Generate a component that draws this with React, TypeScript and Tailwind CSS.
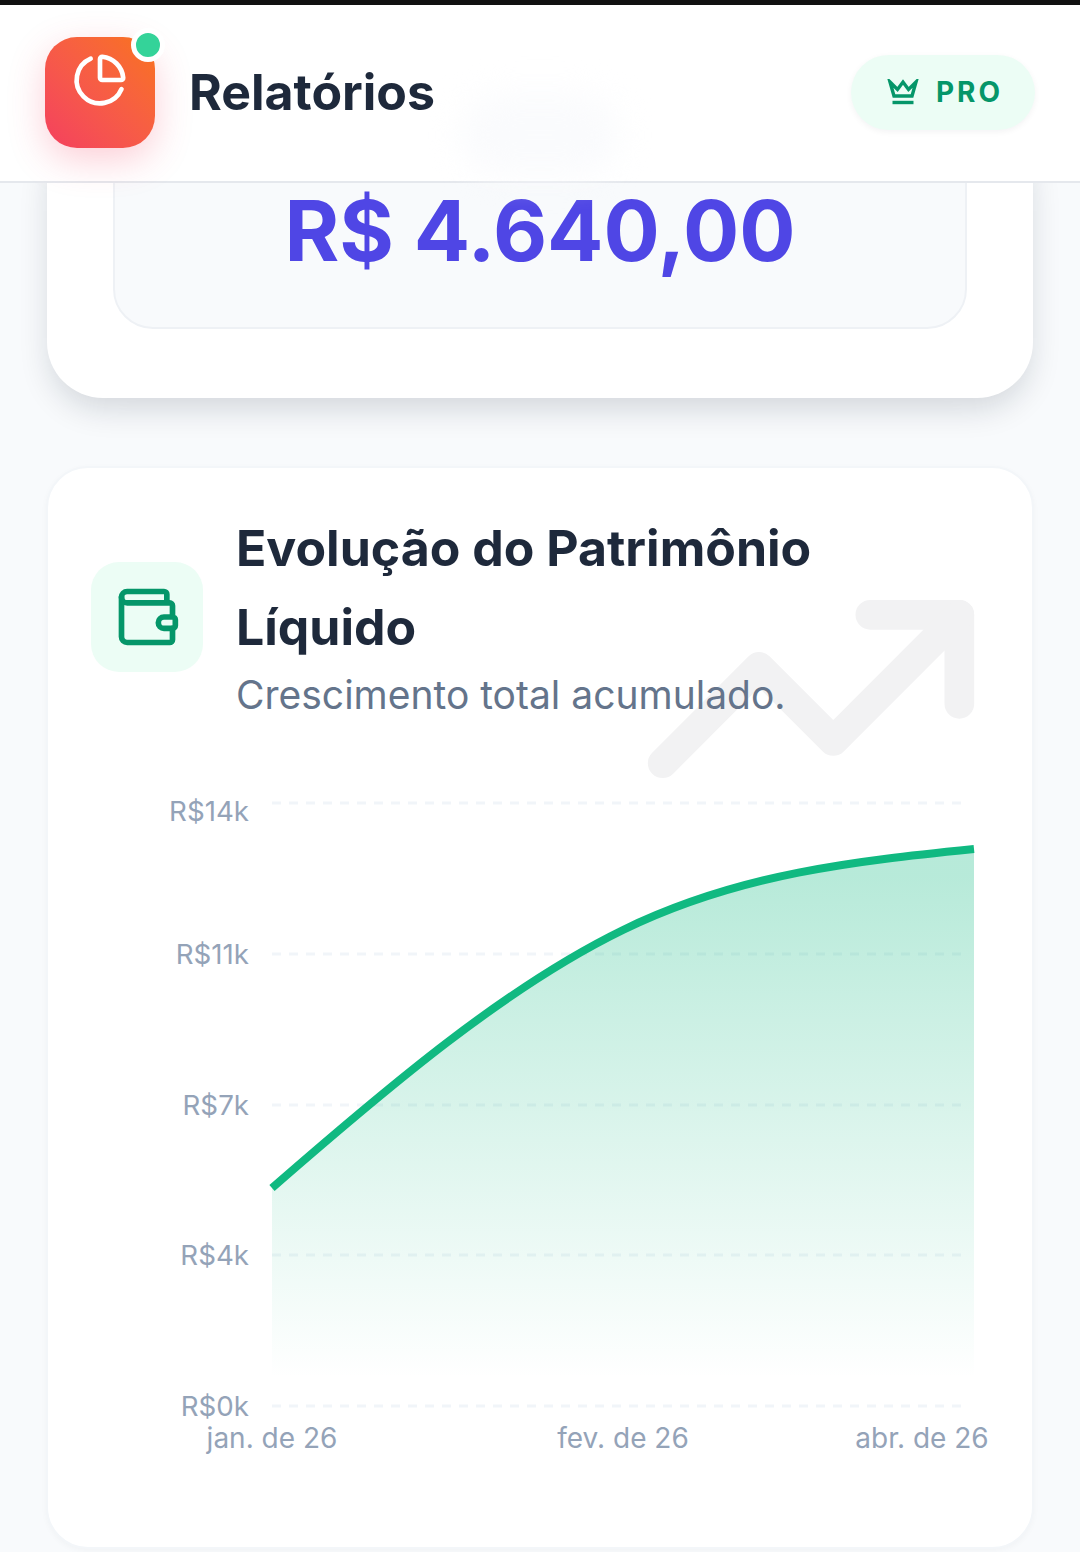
import { PieChart, TrendingUp, Wallet } from "lucide-react";

const yLabels = [
  { label: "R$14k", lineY: 23, textY: 31 },
  { label: "R$11k", lineY: 174, textY: 174 },
  { label: "R$7k", lineY: 325, textY: 325 },
  { label: "R$4k", lineY: 475, textY: 475 },
  { label: "R$0k", lineY: 626, textY: 626 },
];

const xLabels = [
  { label: "jan. de 26", x: 181 },
  { label: "fev. de 26", x: 532 },
  { label: "abr. de 26", x: 831 },
];

const linePath = "M181 408 C298 306 415 207 532 150 C649 93 766 81 883 69";

const CrownIcon = () => (
  <svg viewBox="0 0 32 26" className="h-[26px] w-[32px]" fill="none" stroke="#059669" strokeWidth="3.4">
    <path d="M3 3 L10.5 10.5 L16 3 L21.5 10.5 L29 3 L25 17 H7 Z" />
    <path d="M5.5 23.5 H26.5" />
  </svg>
);

const Chart = () => (
  <svg viewBox="0 0 898 680" className="mt-[58px] block h-[680px] w-[898px]">
    <defs>
      <linearGradient id="patrimonio" x1="0" y1="0" x2="0" y2="1">
        <stop offset="5%" stopColor="#10b981" stopOpacity={0.3} />
        <stop offset="95%" stopColor="#10b981" stopOpacity={0} />
      </linearGradient>
    </defs>
    {yLabels.map((row) => (
      <line
        key={row.label}
        x1="181"
        x2="878"
        y1={row.lineY}
        y2={row.lineY}
        stroke="#f1f5f9"
        strokeWidth="3"
        strokeDasharray="9 8"
      />
    ))}
    <path d={`${linePath} L883 626 L181 626 Z`} fill="url(#patrimonio)" />
    <path d={linePath} fill="none" stroke="#10b981" strokeWidth="8" />
    {yLabels.map((row) => (
      <text
        key={row.label}
        x="158"
        y={row.textY}
        textAnchor="end"
        dominantBaseline="central"
        fill="#94a3b8"
        fontSize="27.7"
      >
        {row.label}
      </text>
    ))}
    {xLabels.map((tick) => (
      <text
        key={tick.label}
        x={tick.x}
        y="658"
        textAnchor="middle"
        dominantBaseline="central"
        fill="#94a3b8"
        fontSize="28"
      >
        {tick.label}
      </text>
    ))}
  </svg>
);

export default function App() {
  return (
    <div className="flex h-[1552px] w-[1080px] flex-col overflow-hidden bg-[#f8fafc] font-['Inter',sans-serif]">
      <div className="h-[5px] shrink-0 bg-[#111111]" />

      {/* Header */}
      <header className="relative z-10 flex h-[178px] shrink-0 items-center justify-between border-b-2 border-[#e5e8ed] bg-white pb-[2px] pl-[45px] pr-[45px]">
        {/* faint glow behind the bar */}
        <div className="absolute left-[460px] top-[90px] h-[80px] w-[160px] rounded-full bg-[#fafbfd] blur-[16px]" />
        <div className="relative flex items-center gap-[34px]">
          <div className="relative flex h-[111px] w-[110px] items-center justify-center rounded-[32px] bg-gradient-to-tr from-[#f43f5e] to-[#f97316] pb-[24px] shadow-[0_12px_36px_rgba(244,63,94,0.25)]">
            <PieChart size={56} color="#ffffff" strokeWidth={2} />
            <span className="absolute right-[-10px] top-[-9px] h-[34px] w-[34px] rounded-full border-[5px] border-white bg-[#34d399]" />
          </div>
          <h1 className="text-[50px] font-bold text-[#1e293b]">Relatórios</h1>
        </div>
        <div className="relative flex h-[75px] w-[184px] items-center justify-center gap-[17px] rounded-full bg-[#ecfdf5] pl-[4px] shadow-[0_2px_6px_rgba(15,23,42,0.05)]">
          <CrownIcon />
          <span className="text-[28px] font-bold tracking-[3px] text-[#059669]">PRO</span>
        </div>
      </header>

      {/* Scrolled content */}
      <main className="flex flex-col gap-[68px] px-[46px]">
        <section className="-mt-[60px] mx-px rounded-[56px] bg-white px-[66px] pb-[69px] shadow-[0_14px_32px_-4px_rgba(15,23,42,0.16)]">
          <div className="flex h-[206px] items-end justify-center rounded-[40px] border-2 border-[#eef1f5] bg-[#f8fafc] pb-[50px]">
            <span className="text-[83.5px] font-bold leading-[92px] text-[#4f46e5]">R$ 4.640,00</span>
          </div>
        </section>

        <section className="relative h-[1083px] overflow-hidden rounded-[42px] border-2 border-[#f3f6f9] bg-white px-[43px] pt-[41px] shadow-[0_2px_6px_rgba(15,23,42,0.03)]">
          <TrendingUp
            size={356}
            strokeWidth={2}
            color="#f2f2f3"
            className="absolute right-[43px] top-[43px]"
          />
          <div className="relative flex items-start gap-[33px]">
            <div className="mt-[53px] flex h-[110px] w-[112px] shrink-0 items-center justify-center rounded-[28px] bg-[#ecfdf5]">
              <Wallet size={68} color="#059669" strokeWidth={2} />
            </div>
            <div className="w-[720px]">
              <h2 className="w-[640px] text-[50px] font-bold leading-[79px] text-[#1e293b]">
                Evolução do Patrimônio Líquido
              </h2>
              <p className="mt-px text-[39px] leading-[54px] text-[#64748b]">Crescimento total acumulado.</p>
            </div>
          </div>
          <Chart />
        </section>
      </main>
    </div>
  );
}
